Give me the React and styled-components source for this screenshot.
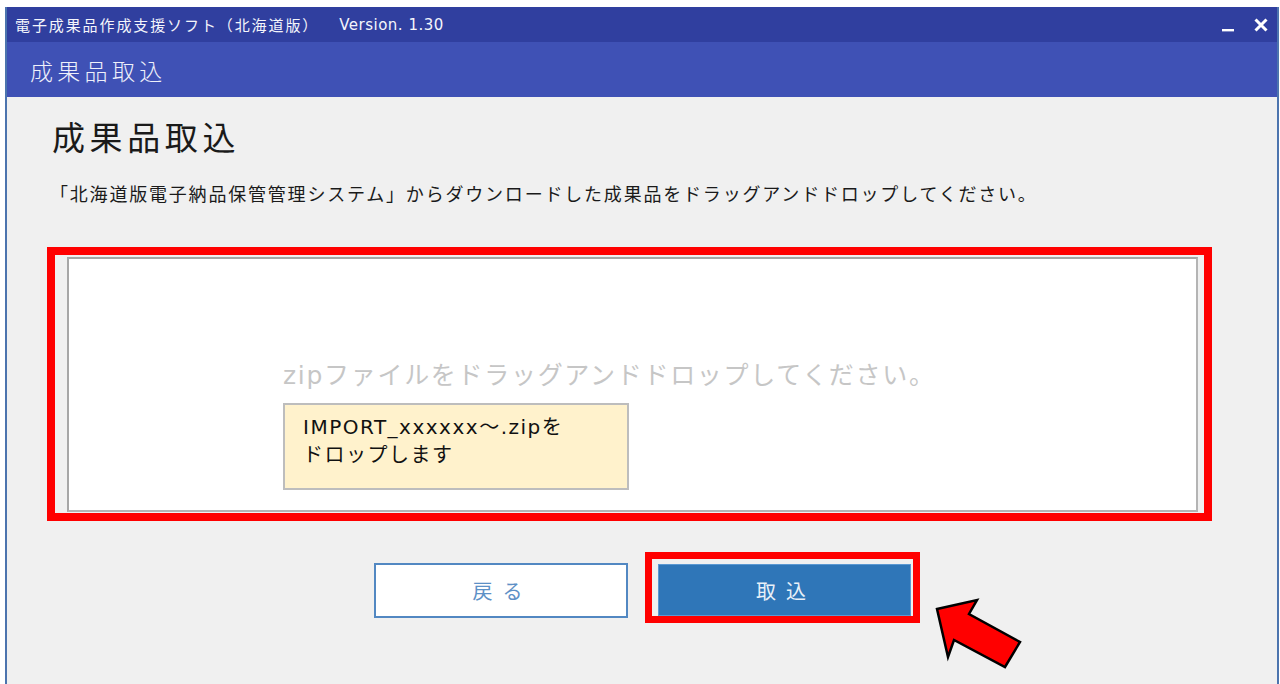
import React from "react";
import styled, { createGlobalStyle } from "styled-components";

const GlobalStyle = createGlobalStyle`
  html, body {
    margin: 0;
    padding: 0;
    background: #ffffff;
    overflow: hidden;
  }
  body {
    font-family: "DejaVu Sans", "Noto Sans CJK JP", sans-serif;
  }
`;

const JP = `"Noto Sans CJK JP", "Noto Sans", sans-serif`;

const Window = styled.div`
  margin: 7px 0 0 5px;
  width: 1274px;
  height: 677px;
  box-sizing: border-box;
  border-left: 2px solid #4c74ae;
  border-right: 2px solid #4c74ae;
  display: flex;
  flex-direction: column;
  overflow: hidden;
  background: #f0f0f0;
`;

const TitleBar = styled.div`
  height: 35px;
  flex: none;
  background: #303f9f;
  display: flex;
  align-items: center;
  padding: 0 9px 0 8px;
  color: #f4f5fb;
`;

const AppName = styled.span`
  font-family: ${JP};
  font-size: 15px;
  letter-spacing: 1.9px;
`;

const Version = styled.span`
  font-family: "DejaVu Sans", sans-serif;
  font-size: 15px;
  margin-left: 20px;
  letter-spacing: 0.5px;
`;

const WindowControls = styled.div`
  margin-left: auto;
  display: flex;
  align-items: center;
  gap: 20px;
`;

const ControlIcon = styled.svg`
  display: block;
`;

const HeaderBar = styled.div`
  height: 55px;
  flex: none;
  background: #3f51b5;
  display: flex;
  align-items: center;
  padding-left: 23px;
  color: #eef0fa;
  font-family: ${JP};
  font-size: 23px;
  font-weight: 300;
  letter-spacing: 4.3px;
`;

const Body = styled.div`
  flex: 1;
  padding: 0 0 0 45px;
  display: flex;
  flex-direction: column;
`;

const Heading = styled.h1`
  margin: 19px 0 0 0;
  font-family: ${JP};
  font-weight: 400;
  font-size: 33px;
  line-height: 40px;
  letter-spacing: 4.6px;
  color: #1a1a1a;
`;

const Description = styled.p`
  margin: 24px 0 0 -2px;
  font-family: ${JP};
  font-size: 18px;
  line-height: 26px;
  letter-spacing: 1.8px;
  color: #1a1a1a;
`;

const DropZoneWrap = styled.div`
  position: relative;
  margin: 51px 0 0 15px;
  width: 1131px;
  height: 255px;
`;

const DropZone = styled.div`
  box-sizing: border-box;
  width: 100%;
  height: 100%;
  background: #ffffff;
  border: 2px solid #a6a6a6;
  border-right-color: #b4b4b4;
  border-bottom-color: #b4b4b4;
  padding: 101px 0 0 214px;
  display: flex;
  flex-direction: column;
  align-items: flex-start;
`;

const DropHint = styled.div`
  font-family: "DejaVu Sans", "Noto Sans CJK JP", sans-serif;
  font-size: 25px;
  line-height: 32px;
  letter-spacing: 1.7px;
  color: #c6c6c6;
`;

const Note = styled.div`
  margin-top: 11px;
  box-sizing: border-box;
  width: 346px;
  height: 87px;
  background: #fff2cc;
  border: 2px solid #bdbdbd;
  padding: 8px 0 0 18px;
  font-family: "DejaVu Sans", "Noto Sans CJK JP", sans-serif;
  font-size: 20px;
  line-height: 28px;
  color: #111111;
  letter-spacing: 1.5px;
`;

const Highlight = styled.div`
  position: absolute;
  top: ${(p) => p.$top}px;
  left: ${(p) => p.$left}px;
  right: ${(p) => p.$right}px;
  bottom: ${(p) => p.$bottom}px;
  border: ${(p) => p.$width}px solid #ff0000;
  pointer-events: none;
`;

const ButtonRow = styled.div`
  margin-top: 51px;
  margin-left: -45px;
  display: flex;
  justify-content: center;
  align-items: flex-start;
  gap: 30px;
`;

const ButtonSlot = styled.div`
  position: relative;
  margin-top: ${(p) => p.$offset || 0}px;
`;

const Button = styled.button`
  box-sizing: border-box;
  width: ${(p) => p.$w}px;
  height: ${(p) => p.$h}px;
  font-family: ${JP};
  font-size: 20px;
  letter-spacing: 10px;
  padding-left: 10px;
  cursor: pointer;
  border: ${(p) => (p.$primary ? "1px solid #5b98d2" : "2px solid #5288c2")};
  background: ${(p) => (p.$primary ? "#2f76b8" : "#ffffff")};
  color: ${(p) => (p.$primary ? "#e8f0f8" : "#5d90c6")};
`;

const Pointer = styled.svg`
  position: absolute;
  left: 274px;
  top: 31px;
  overflow: visible;
`;

export default function App() {
  return (
    <>
      <GlobalStyle />
      <Window>
        <TitleBar>
          <AppName>電子成果品作成支援ソフト（北海道版）</AppName>
          <Version>Version. 1.30</Version>
          <WindowControls>
            <ControlIcon width="12" height="14" viewBox="0 0 12 14">
              <rect x="0" y="11" width="12" height="2.4" fill="#ffffff" />
            </ControlIcon>
            <ControlIcon width="14" height="14" viewBox="0 0 14 14">
              <path d="M1.5 1.5 L12.5 12.5 M12.5 1.5 L1.5 12.5" stroke="#ffffff" strokeWidth="3" />
            </ControlIcon>
          </WindowControls>
        </TitleBar>
        <HeaderBar>成果品取込</HeaderBar>
        <Body>
          <Heading>成果品取込</Heading>
          <Description>
            「北海道版電子納品保管管理システム」からダウンロードした成果品をドラッグアンドドロップしてください。
          </Description>
          <DropZoneWrap>
            <DropZone>
              <DropHint>zipファイルをドラッグアンドドロップしてください。</DropHint>
              <Note>
                IMPORT_xxxxxx～.zipを
                <br />
                ドロップします
              </Note>
            </DropZone>
            <Highlight $top={-10} $left={-20} $right={-14} $bottom={-9} $width={8} />
          </DropZoneWrap>
          <ButtonRow>
            <ButtonSlot>
              <Button $w={254} $h={55}>戻る</Button>
            </ButtonSlot>
            <ButtonSlot $offset={1}>
              <Button $primary $w={253} $h={52}>取込</Button>
              <Highlight $top={-12} $left={-13} $right={-9} $bottom={-7} $width={7} />
              <Pointer width="94" height="78" viewBox="0 0 94 78">
                <polygon
                  points="5,14 45,5 37,19 88,47 73,72 22,45 16,62"
                  fill="#ff0000"
                  stroke="#000000"
                  strokeWidth="2.5"
                  strokeLinejoin="miter"
                />
              </Pointer>
            </ButtonSlot>
          </ButtonRow>
        </Body>
      </Window>
    </>
  );
}
